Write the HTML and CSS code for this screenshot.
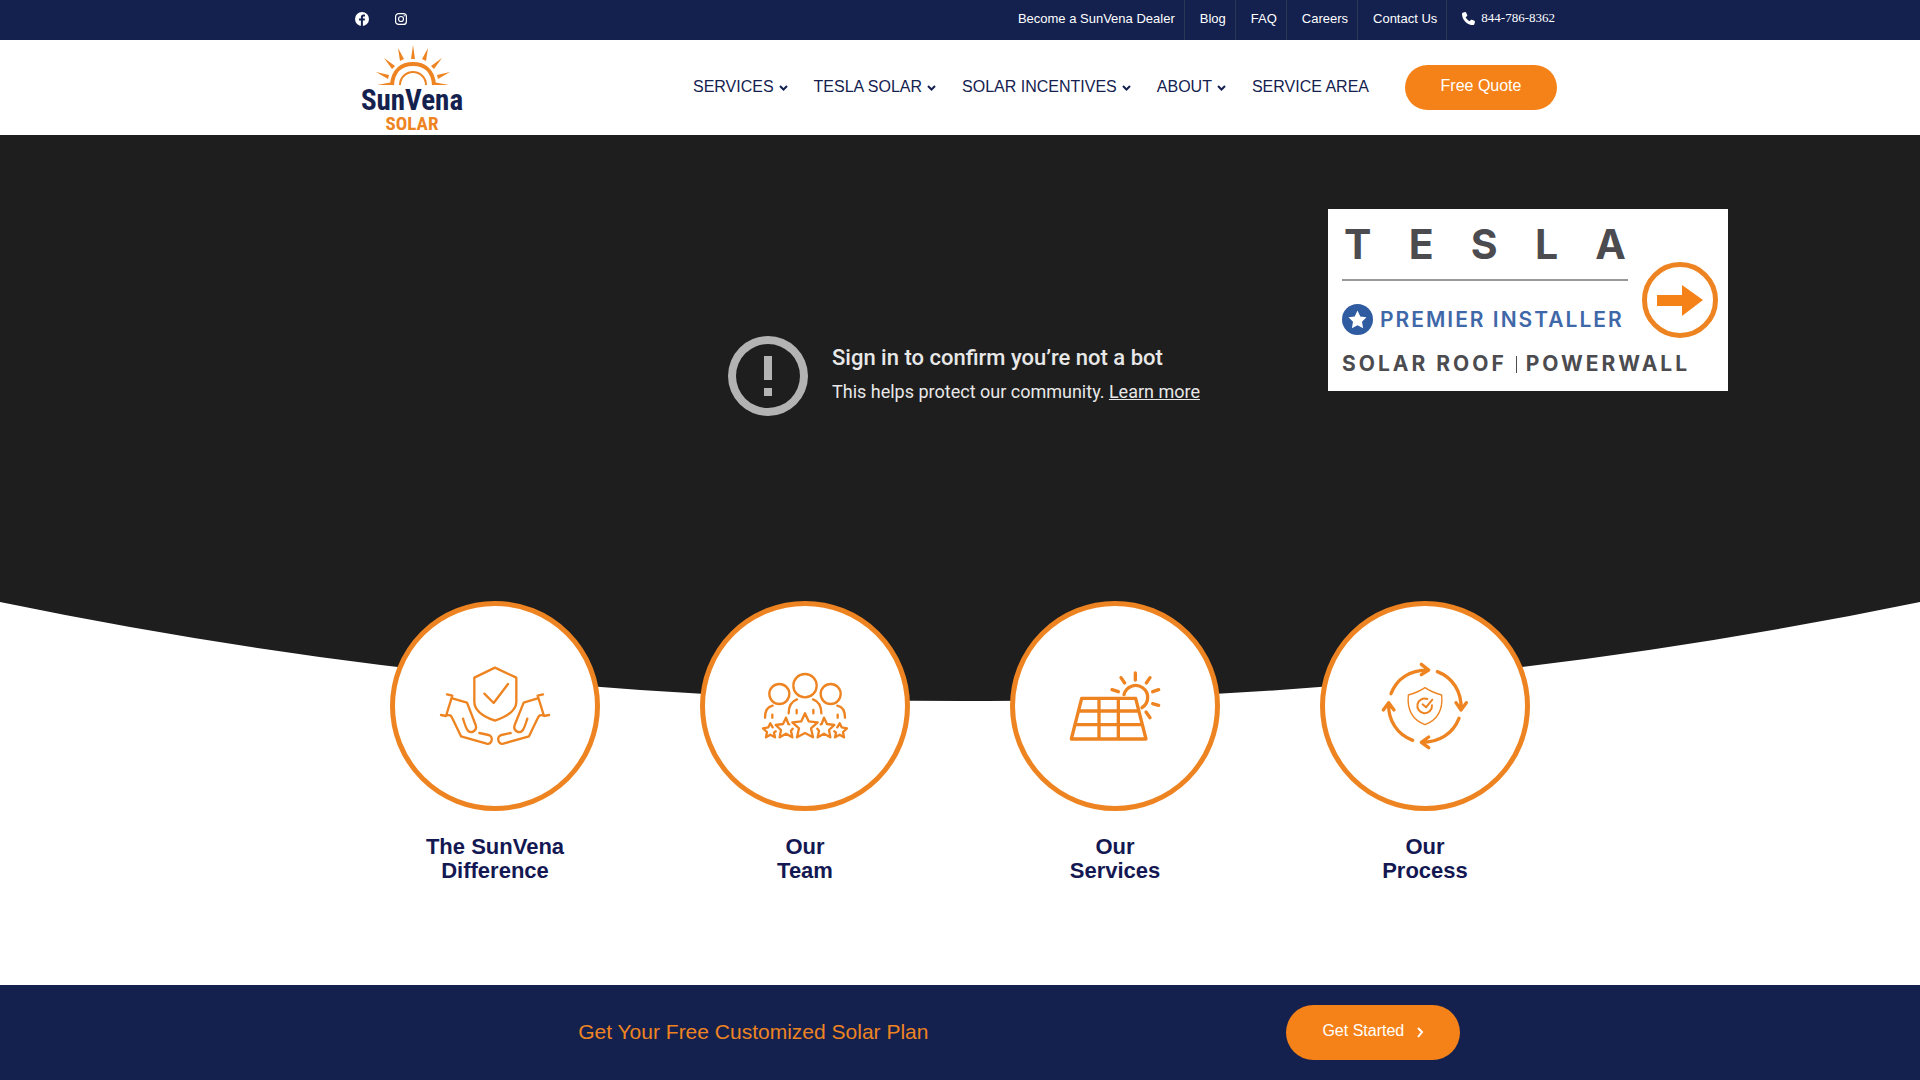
FILE: index.html
```html
<!DOCTYPE html>
<html lang="en">
<head>
<meta charset="utf-8">
<title>SunVena Solar</title>
<meta name="viewport" content="width=device-width, initial-scale=1">
<link rel="stylesheet" href="styles.css">
</head>
<body>
<div class="topbar">
  <div class="container topbar-inner">
    <div class="social">
      <a href="#" aria-label="Facebook"><svg class="icon-fb" viewBox="0 0 14 14"><circle cx="7" cy="7" r="7" fill="#fff"/><path d="M7.9 14V8.6h1.8l.3-2H7.9V5.4c0-.6.3-1 1.1-1h1V2.7S9.300 2.500 8.500 2.500C6.800 2.500 5.900 3.400 5.900 5.100v1.500H4v2h1.900V14z" fill="#14214f"/></svg></a>
      <a href="#" aria-label="Instagram"><svg class="icon-ig" viewBox="0 0 12 12" fill="none" stroke="#fff"><rect x=".6" y=".6" width="10.800" height="10.800" rx="3" stroke-width="1.200"/><circle cx="6" cy="6" r="2.500" stroke-width="1.200"/><circle cx="9.200" cy="2.800" r=".7" fill="#fff" stroke="none"/></svg></a>
    </div>
    <nav class="toplinks" aria-label="Secondary">
      <a href="#">Become a SunVena Dealer</a>
      <a href="#">Blog</a>
      <a href="#">FAQ</a>
      <a href="#">Careers</a>
      <a href="#">Contact Us</a>
      <a href="#" class="phone"><svg viewBox="0 0 512 512" fill="#fff"><path d="M165 25c-8-19-29-29-48-23L29 26C12 31 0 46 0 64c0 247 201 448 448 448 18 0 33-12 38-29l24-88c5-20-5-40-23-48l-96-40c-17-7-36-2-47 12l-41 49C233 334 178 279 144 209l49-40c14-12 19-31 12-48z"/></svg>844-786-8362</a>
    </nav>
  </div>
</div>

<header class="header">
  <div class="container header-inner">
    <a href="#" class="logo" aria-label="SunVena Solar">
      <svg viewBox="0 0 102 88">
        <g fill="none" stroke="#ee8421">
          <path d="M31 41C32 26 41 20 52 20S72 26 73 41" stroke-width="4"/>
          <path d="M39 41a13 13 0 0 1 26 0" stroke-width="2"/>
        </g>
        <g fill="#ee8421">
          <path d="M52 1l2 14h-4zM37 4l6 11-4 2zM67 4l-6 11 4 2zM23 14l11 8-3 3zM81 14l-11 8 3 3zM15 28l13 3-1 4zM89 28l-13 3 1 4zM16 41l16-3v3zM88 41l-16-3v3z"/>
        </g>
        <text x="51" y="66" text-anchor="middle" class="logo-name">SunVena</text>
        <text x="51" y="86" text-anchor="middle" class="logo-sub">SOLAR</text>
      </svg>
    </a>
    <nav class="mainnav" aria-label="Primary">
      <a href="#">SERVICES<svg viewBox="0 0 9 7"><path d="M1 1l3.500 3.500L8 1"/></svg></a>
      <a href="#">TESLA SOLAR<svg viewBox="0 0 9 7"><path d="M1 1l3.500 3.500L8 1"/></svg></a>
      <a href="#">SOLAR INCENTIVES<svg viewBox="0 0 9 7"><path d="M1 1l3.500 3.500L8 1"/></svg></a>
      <a href="#">ABOUT<svg viewBox="0 0 9 7"><path d="M1 1l3.500 3.500L8 1"/></svg></a>
      <a href="#">SERVICE AREA</a>
      <a href="#" class="btn">Free Quote</a>
    </nav>
  </div>
</header>

<main>
  <section class="hero">
    <div class="message">
      <svg viewBox="0 0 24 24" fill="#b3b3b3"><path d="M11 15h2v2h-2zm0-8h2v6h-2zm1-5a10 10 0 1 0 0 20 10 10 0 0 0 0-20zm0 18a8 8 0 1 1 0-16 8 8 0 0 1 0 16z"/></svg>
      <div>
        <p class="message-title">Sign in to confirm you’re not a bot</p>
        <p class="message-sub">This helps protect our community. <a href="#">Learn more</a></p>
      </div>
    </div>
    <a href="#" class="promo">
      <div class="promo-main">
        <div class="wordmark"><span>T</span><span>E</span><span>S</span><span>L</span><span>A</span></div>
        <div class="premier">
          <svg viewBox="0 0 31 31"><circle cx="15.500" cy="15.500" r="15.500" fill="#2f5ba0"/><path d="M15.500 6.500l2.800 5.900 6.200.8-4.500 4.500 1.100 6.500-5.600-3-5.600 3 1.100-6.500-4.500-4.500 6.200-.8z" fill="#fff"/></svg>
          <span>PREMIER INSTALLER</span>
        </div>
      </div>
      <svg class="promo-arrow" viewBox="0 0 76 76"><circle cx="38" cy="38" r="35.500" fill="none" stroke="#ee8421" stroke-width="5"/><path d="M15 33h25V23l21 15-21 16V44H15z" fill="#f58218"/></svg>
      <div class="promo-products"><span>SOLAR ROOF</span><span class="bar"></span><span>POWERWALL</span></div>
    </a>
    <svg class="curve" viewBox="0 0 100 100" preserveAspectRatio="none"><path d="M0 0Q50 198 100 0V100H0z" fill="#fff"/></svg>
  </section>

  <section class="container features">
    <a href="#" class="feature">
      <svg class="ring" viewBox="45 48 600 600" fill="none" stroke="#ee8421" stroke-width="7" stroke-linecap="round" stroke-linejoin="round">
        <path d="M345 233l64 30v72c0 24-24 43-64 57-40-14-62-33-62-57v-72z"/>
        <path d="M313 311l28 28 43-57"/>
        <path d="M201 313l16 4-19 61-15-3M217 325l44 13 26 67c6 18-15 28-25 15-6-10-9-22-13-34M202 376c10-2 12 2 15 9l26 54 77 22c17 4 21-23 6-26l-28-6"/>
        <path d="M489 313l-16 4 19 61 15-3M473 325l-42 13-27 67c-6 18 15 28 25 15 6-10 9-22 13-34M488 376c-10-2-12 2-15 9l-26 54-77 22c-17 4-21-23-6-26l28-6"/>
      </svg>
      <h2>The SunVena<br>Difference</h2>
    </a>
    <a href="#" class="feature">
      <svg class="ring" viewBox="45 48 600 600" fill="none" stroke="#ee8421" stroke-width="7" stroke-linecap="round" stroke-linejoin="round">
        <circle cx="345" cy="287" r="35"/><circle cx="268" cy="312" r="30"/><circle cx="422" cy="312" r="30"/>
        <path d="M296 370c0-22 8-36 25-42M394 370c0-22-8-36-25-42M225 383c0-22 8-33 23-36M465 383c0-22-8-33-23-36M320 360v10M370 360v10M247 374v9M443 374v9"/>
        <path d="M345 370l11 24 27 3-20 18 6 27-24-13-24 13 6-27-20-18 27-3z"/>
        <path d="M298 403l-3-1-7-19-9 19-22 3 16 15-4 22 19-11 19 11-4-20 5-6M392 403l3-1 7-19 9 19 22 3-16 15 4 22-19-11-19 11 4-20-5-6"/>
        <path d="M248 412l-7-12-6 12-16 3 12 11-3 16 13-8 14 8-3-14 5-4M442 412l7-12 6 12 16 3-12 11 3 16-13-8-14 8 3-14-5-4"/>
      </svg>
      <h2>Our<br>Team</h2>
    </a>
    <a href="#" class="feature">
      <svg class="ring" viewBox="45 48 600 600" fill="none" stroke="#ee8421" stroke-width="10" stroke-linecap="round" stroke-linejoin="round">
        <path d="M245 325h162l31 122H214zM235 363h182M225 404h202M297 325v122M355 325v122"/>
        <path d="M372 314a36 36 0 1 1 54 39"/>
        <path d="M406 249v21M363 263l11 16M450 263l-11 16M336 299l19 6M476 299l-18 6M458 341l18 5M438 366l12 17"/>
      </svg>
      <h2>Our<br>Services</h2>
    </a>
    <a href="#" class="feature">
      <svg class="ring" viewBox="45 48 600 600" fill="none" stroke="#ee8421" stroke-width="10" stroke-linecap="round" stroke-linejoin="round">
        <path d="M243 311c17-44 55-71 112-71M334 223l22 17-22 14M382 245c44 17 74 58 71 113M438 338l15 22 16-22M447 385c-18 46-60 72-112 72M356 441l-22 16 22 16M308 451c-46-17-74-59-72-111M220 360l16-22 16 22"/>
        <path d="M345 293c16 11 32 17 50 22 4 42-8 73-50 89-42-16-54-47-50-89 18-5 34-11 50-22z" stroke-width="4"/>
        <path d="M352 327a22 22 0 1 0 14 19M338 343l10 9 19-23" stroke-width="6"/>
      </svg>
      <h2>Our<br>Process</h2>
    </a>
  </section>
</main>

<section class="cta">
  <div class="container cta-inner">
    <h2>Get Your Free Customized Solar Plan</h2>
    <div class="cta-action"><a href="#" class="btn btn-large">Get Started<svg viewBox="0 0 8 11"><path d="M2 1l4 4-4 5"/></svg></a></div>
  </div>
</section>
</body>
</html>
```
FILE: styles.css
```css
* { box-sizing: border-box; }

body {
  margin: 0;
  background: #fff;
  color: #14214f;
  font-family: "Liberation Sans", Arial, sans-serif;
  font-size: 16px;
}

a { color: inherit; text-decoration: none; }
h2, p { margin: 0; }
svg { display: block; flex: none; }

.container { max-width: 1240px; margin: 0 auto; }

/* Top bar */
.topbar { background: #14214f; color: #fff; font-size: 13px; }
.topbar-inner {
  display: flex;
  justify-content: space-between;
  height: 40px;
  padding: 0 25px 0 15px;
}
.social { display: flex; align-items: center; gap: 26px; padding-bottom: 3px; }
.icon-fb { width: 14px; height: 14px; }
.icon-ig { width: 12px; height: 12px; }
.toplinks { display: flex; }
.toplinks a {
  display: flex;
  align-items: center;
  padding: 0 9px 4px 15px;
  border-right: 1px solid #2b3655;
}
.toplinks .phone {
  gap: 6px;
  padding-right: 0;
  border-right: 0;
  font-family: "Liberation Serif", serif;
}
.phone svg { width: 13px; height: 13px; }

/* Header */
.header-inner {
  display: flex;
  justify-content: space-between;
  align-items: center;
  height: 95px;
  padding: 0 23px 0 21px;
}
.logo svg { width: 102px; height: 88px; overflow: visible; }
.logo-name {
  fill: #14214f;
  font: bold 29px "Liberation Sans Narrow", "Roboto Condensed", "DejaVu Sans Condensed", sans-serif;
}
.logo-sub {
  fill: #ee8421;
  font: bold 19px "Liberation Sans Narrow", "Roboto Condensed", "DejaVu Sans Condensed", sans-serif;
}
.mainnav { display: flex; align-items: center; gap: 26px; }
.mainnav a { display: flex; align-items: center; gap: 5px; padding-bottom: 2px; }
.mainnav svg {
  width: 9px;
  height: 7px;
  margin-top: 4px;
  fill: none;
  stroke: #14214f;
  stroke-width: 2;
}

.btn {
  justify-content: center;
  border-radius: 28px;
  background: #f58218;
  color: #fff;
}
.mainnav .btn { width: 152px; height: 45px; margin-left: 10px; padding-bottom: 4px; }

/* Hero */
.hero {
  position: relative;
  padding-top: 193px;
  background: #1e1e1e;
  color: #e8e8e8;
  font-family: Roboto, sans-serif;
}
.message { display: flex; justify-content: center; gap: 16px; }
.message > svg { width: 96px; height: 96px; }
.message-title { padding-top: 16px; font-size: 22px; font-weight: 500; line-height: 28px; }
.message-sub { margin-top: 8px; font-size: 18px; line-height: 24px; }
.message-sub a { text-decoration: underline; }
.curve { width: 100%; height: 100px; margin-top: 178px; }

.promo {
  position: absolute;
  top: 74px;
  right: 10%;
  display: grid;
  grid-template-columns: 286px 76px;
  column-gap: 14px;
  align-content: start;
  width: 400px;
  height: 182px;
  padding: 12px 8px 0 14px;
  background: #fff;
  color: #4c4c50;
  font: 600 21px/24px Inter, sans-serif;
}
.wordmark {
  display: flex;
  justify-content: space-between;
  height: 60px;
  padding: 0 2px;
  border-bottom: 2px solid #999;
  font: 700 41px/46px Inter, sans-serif;
}
.premier {
  display: flex;
  align-items: center;
  gap: 7px;
  margin-top: 23px;
  color: #3f68a8;
  letter-spacing: 2px;
  white-space: nowrap;
}
.premier svg { width: 31px; height: 31px; }
.promo-arrow { width: 76px; height: 76px; margin-top: 41px; }
.promo-products {
  display: flex;
  align-items: center;
  grid-column: 1 / -1;
  gap: 9px;
  margin-top: 14px;
  font-weight: 700;
  letter-spacing: 3px;
  white-space: nowrap;
}
.bar { width: 1px; height: 17px; background: #4c4c50; }

/* Features */
.features {
  position: relative;
  display: grid;
  grid-template-columns: repeat(4, 1fr);
  margin-top: -101px;
  padding-bottom: 102px;
}
.feature { display: flex; flex-direction: column; align-items: center; }
.ring {
  width: 210px;
  height: 210px;
  border: 5px solid #ee8421;
  border-radius: 50%;
  background: #fff;
}
.feature h2 {
  margin-top: 24px;
  color: #141852;
  font-size: 22px;
  line-height: 24px;
  text-align: center;
}

/* Call to action */
.cta { background: #14214f; }
.cta-inner {
  display: grid;
  grid-template-columns: 2fr 1fr;
  align-items: center;
  padding: 20px 0;
}
.cta h2 { padding-bottom: 2px; color: #ee8421; font-size: 21px; font-weight: 400; text-align: center; }
.cta-action { display: flex; justify-content: center; }
.btn-large {
  display: flex;
  align-items: center;
  gap: 12px;
  width: 174px;
  height: 55px;
  padding-bottom: 4px;
}
.btn-large svg {
  width: 8px;
  height: 11px;
  margin-top: 4px;
  fill: none;
  stroke: #fff;
  stroke-width: 2;
}
```
